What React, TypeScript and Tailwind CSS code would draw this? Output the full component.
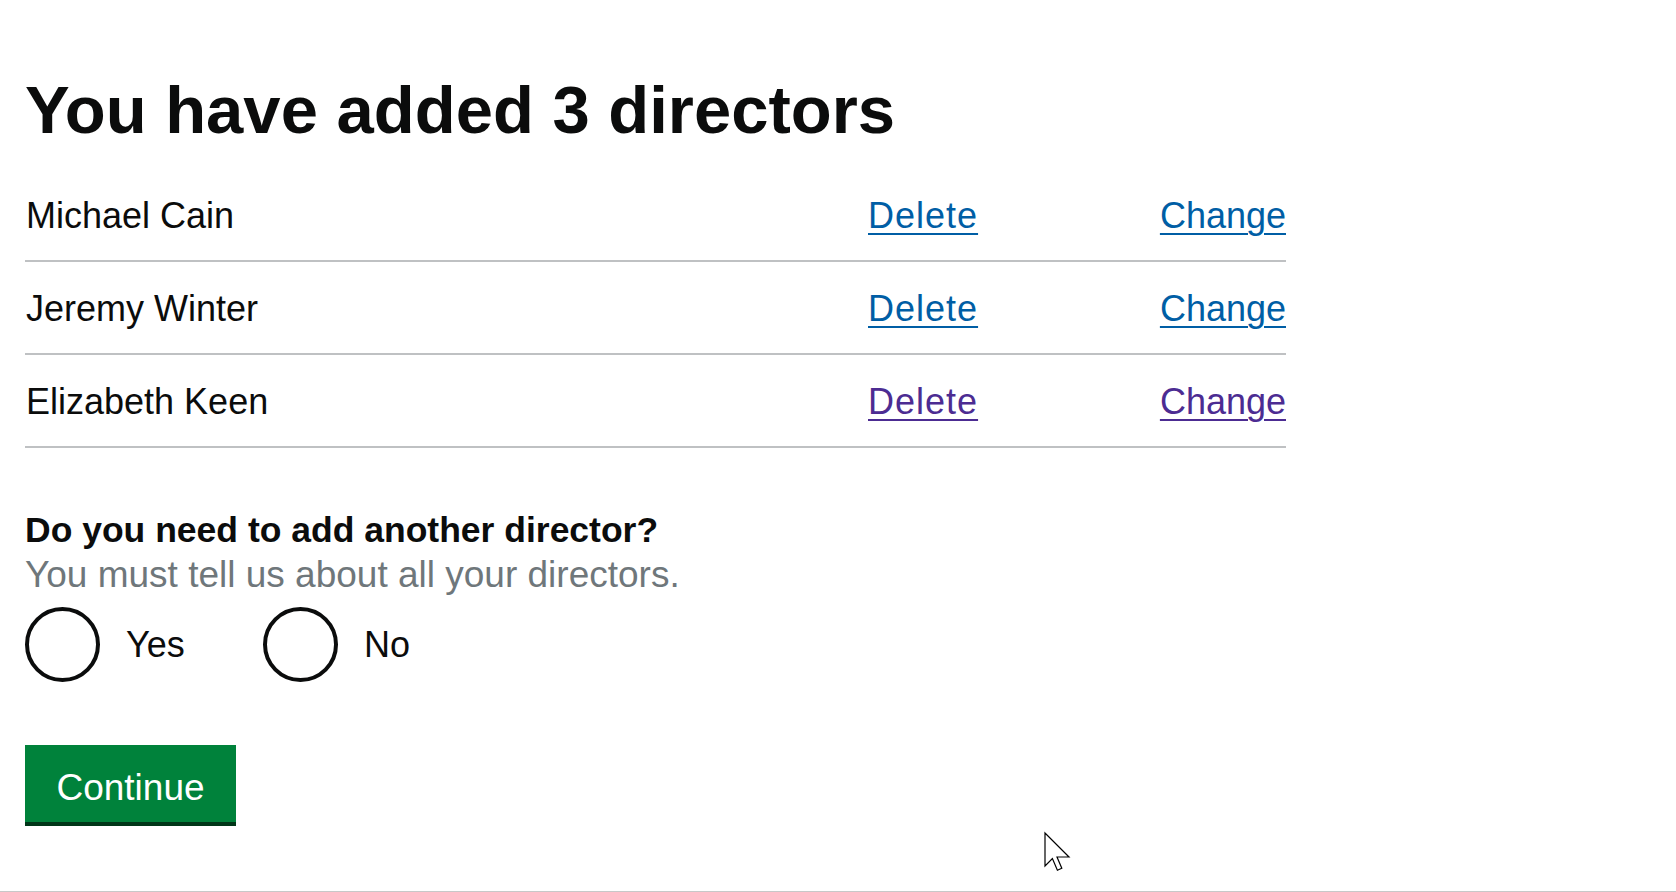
import React from 'react'

type Director = {
    name: string
    visited?: boolean
}

const directors: Director[] = [
    { name: 'Michael Cain' },
    { name: 'Jeremy Winter' },
    { name: 'Elizabeth Keen', visited: true },
]

const Radio = ({ label, className }: { label: string; className?: string }) => (
    <label className={`flex items-center ${className ?? ''}`}>
        <span className="box-border block h-[75px] w-[75px] shrink-0 rounded-full border-[4px] border-[#0b0c0c] bg-white" />
        <span className="ml-[26px] text-[36px] leading-[40px]">{label}</span>
    </label>
)

const App: React.FC = () => {
    return (
        <div
            className="relative box-border h-[892px] border-b border-[#c8c8c8] bg-white pl-[25px] text-[#0b0c0c]"
            style={{ fontFamily: '"Liberation Sans", Arial, sans-serif' }}
        >
            <div className="w-[1261px] pt-[70px]">
                <h1 className="mb-[19px] text-[67px] font-bold leading-[80px]">
                    You have added 3 directors
                </h1>

                <div>
                    {directors.map((d) => {
                        const linkColour = d.visited
                            ? 'text-[#4c2c92]'
                            : 'text-[#005ea5]'
                        return (
                            <div
                                key={d.name}
                                className="flex border-b-2 border-[#bfc1c3] pt-[27px] pb-[24px] text-[36px] leading-[40px]"
                            >
                                <div className="w-[843px] pl-px">{d.name}</div>
                                <div className="flex-1">
                                    <a
                                        href="#"
                                        className={`${linkColour} tracking-[1px] underline decoration-2 underline-offset-[5px]`}
                                    >
                                        Delete
                                    </a>
                                </div>
                                <div className="text-right">
                                    <a
                                        href="#"
                                        className={`${linkColour} underline decoration-2 underline-offset-[5px]`}
                                    >
                                        Change
                                    </a>
                                </div>
                            </div>
                        )
                    })}
                </div>

                {/* question */}
                <fieldset className="mt-[62px]">
                    <legend className="text-[35.5px] font-bold leading-[40px]">
                        Do you need to add another director?
                    </legend>
                    <div className="mt-[5px] text-[37px] leading-[40px] text-[#6f777b]">
                        You must tell us about all your directors.
                    </div>
                    <div className="mt-[12px] flex">
                        <Radio label="Yes" className="w-[238px]" />
                        <Radio label="No" />
                    </div>
                </fieldset>

                <button className="mt-[63px] box-border h-[81px] w-[211px] border-b-[4px] border-[#003618] bg-[#00823b] pt-[8px] text-[37px] leading-[40px] text-white">
                    Continue
                </button>
            </div>

            {/* mouse pointer */}
            <svg
                className="absolute left-[1043px] top-[831px]"
                width="28"
                height="42"
                viewBox="0 0 14 21"
            >
                <path
                    d="M1 1 V17.5 L4.7 13.8 L7.2 19.6 L9.4 18.6 L7 13 H13 Z"
                    fill="white"
                    stroke="black"
                    strokeWidth="0.6"
                    strokeLinejoin="miter"
                />
            </svg>
        </div>
    )
}

export default App
